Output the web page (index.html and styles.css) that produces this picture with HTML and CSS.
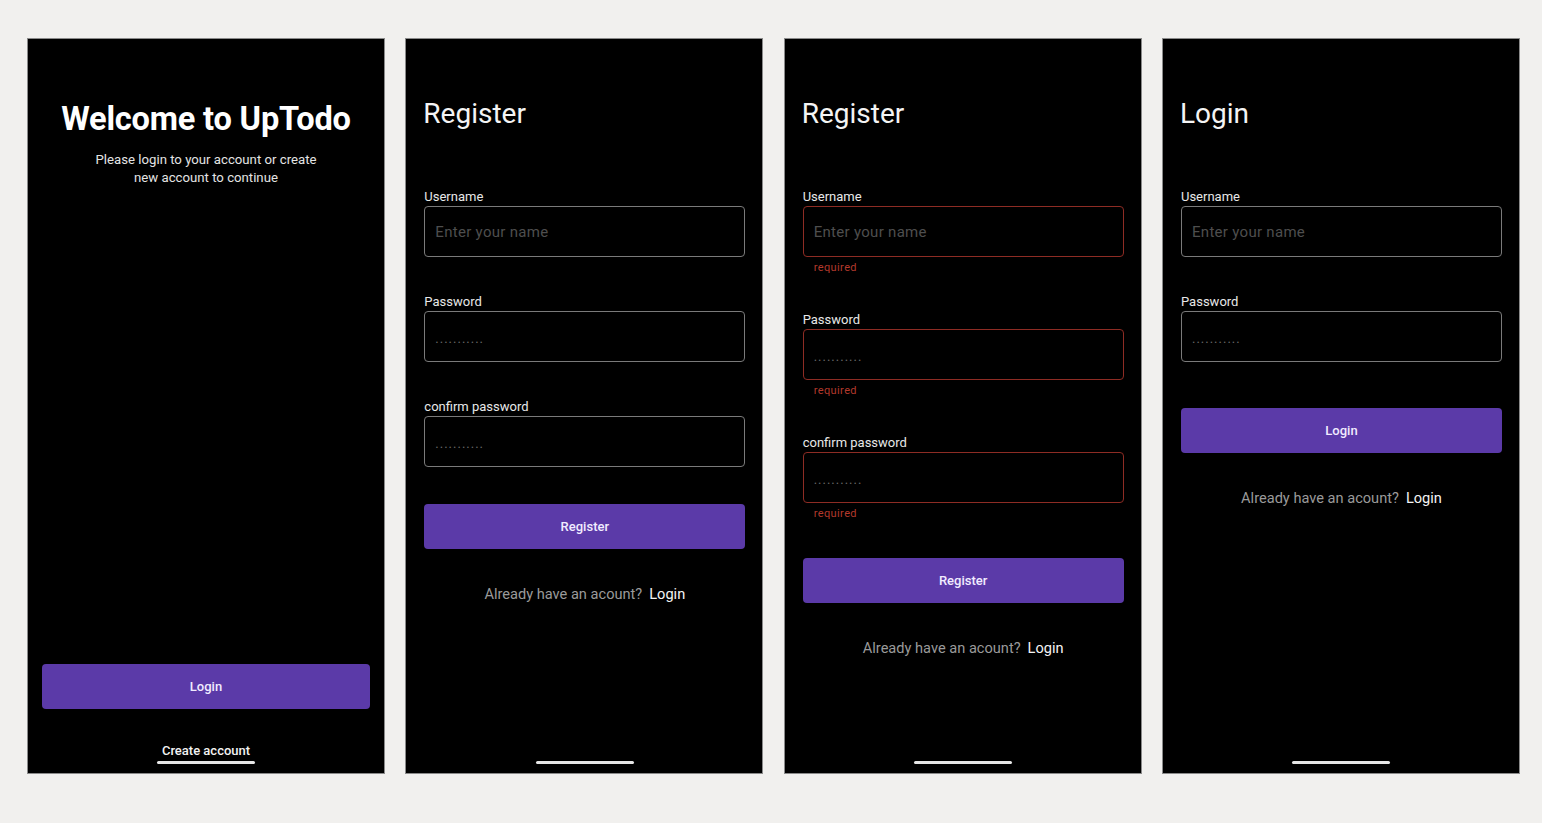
FILE: index.html
```html
<!DOCTYPE html>
<html>
	<head>
		<meta charset="UTF-8">
		<title>UpTodo</title>
		<link rel="stylesheet" href="styles.css">
	</head>
	<body>
		<div id="board">
			<div class="screen welcome">
				<h1 class="welcome-title">Welcome to UpTodo</h1>
				<p class="welcome-text">Please login to your account or create<br>new account to continue</p>
				<div class="spacer"></div>
				<button class="btn btn-wide" type="button">Login</button>
				<a class="create-link" href="javascript:void(0);">Create account</a>
				<div class="home-bar"></div>
			</div>

			<div class="screen">
				<h2 class="screen-title">Register</h2>
				<div class="field">
					<label>Username</label>
					<input type="text" placeholder="Enter your name">
				</div>
				<div class="field">
					<label>Password</label>
					<input class="dots" type="text" placeholder="...........">
				</div>
				<div class="field">
					<label>confirm password</label>
					<input class="dots" type="text" placeholder="...........">
				</div>
				<button class="btn" type="button">Register</button>
				<p class="switch">Already have an acount?<a href="javascript:void(0);">Login</a></p>
				<div class="home-bar"></div>
			</div>

			<div class="screen">
				<h2 class="screen-title">Register</h2>
				<div class="field error">
					<label>Username</label>
					<input type="text" placeholder="Enter your name">
					<span class="hint">required</span>
				</div>
				<div class="field error">
					<label>Password</label>
					<input class="dots" type="text" placeholder="...........">
					<span class="hint">required</span>
				</div>
				<div class="field error">
					<label>confirm password</label>
					<input class="dots" type="text" placeholder="...........">
					<span class="hint">required</span>
				</div>
				<button class="btn" type="button">Register</button>
				<p class="switch">Already have an acount?<a href="javascript:void(0);">Login</a></p>
				<div class="home-bar"></div>
			</div>

			<div class="screen login">
				<h2 class="screen-title">Login</h2>
				<div class="field">
					<label>Username</label>
					<input type="text" placeholder="Enter your name">
				</div>
				<div class="field">
					<label>Password</label>
					<input class="dots" type="text" placeholder="...........">
				</div>
				<button class="btn" type="button">Login</button>
				<p class="switch">Already have an acount?<a href="javascript:void(0);">Login</a></p>
				<div class="home-bar"></div>
			</div>
		</div>
	</body>
</html>
```

FILE: styles.css
```css
* {
	margin: 0;
	padding: 0;
	box-sizing: border-box;
}
body {
	background-color: #f1f0ee;
	font-family: Roboto, "Liberation Sans", sans-serif;
	color: #fff;
}
#board {
	display: flex;
	gap: 20.33px;
	padding: 38px 0 0 27px;
}
.screen {
	width: 358px;
	height: 735.5px;
	flex-shrink: 0;
	background-color: #000;
	border: 1px solid #8a8a8a;
	display: flex;
	flex-direction: column;
	padding: 57px 17px 9px 18px;
}
.welcome {
	padding: 60px 14px 9px 14px;
	align-items: stretch;
}
.welcome-title {
	font-size: 32.6px;
	font-weight: 700;
	line-height: 40px;
	text-align: center;
	letter-spacing: -0.2px;
}
.welcome-text {
	margin-top: 12px;
	font-size: 13.2px;
	line-height: 18px;
	text-align: center;
	color: #e4e4e4;
}
.spacer {
	flex: 1;
}
.btn {
	height: 45px;
	border: none;
	border-radius: 4px;
	background-color: #5b3aa8;
	color: #f1ecff;
	font-family: inherit;
	font-size: 13px;
	font-weight: 500;
	cursor: pointer;
	margin-top: 37px;
}
.btn-wide {
	margin-top: 0;
}
.login .btn {
	margin-top: 46px;
}
.create-link {
	margin-top: 33px;
	align-self: center;
	font-size: 13px;
	font-weight: 500;
	line-height: 18px;
	color: #f2f2f2;
	text-decoration: none;
}
.home-bar {
	margin-top: auto;
	align-self: center;
	width: 98px;
	height: 3px;
	border-radius: 2px;
	background-color: #e6e6e6;
	flex-shrink: 0;
}
.welcome .home-bar {
	margin-top: 1px;
}
.screen-title {
	font-size: 28px;
	font-weight: 400;
	line-height: 36px;
	color: #f4f4f4;
	margin-bottom: 57px;
	margin-left: -1px;
}
.field {
	display: flex;
	flex-direction: column;
}
.field + .field {
	margin-top: 37px;
}
.field label {
	font-size: 13px;
	line-height: 16px;
	color: #e8e8e8;
	margin-bottom: 1px;
}
.field input {
	height: 51px;
	border: 1px solid #7a7a7a;
	border-radius: 4px;
	background-color: #000;
	outline: none;
	padding: 0 10px;
	font-family: inherit;
	font-size: 15px;
	letter-spacing: 0.3px;
	color: #fff;
}
.field input::placeholder {
	color: #4e4e4e;
}
.field input.dots {
	font-size: 13px;
	letter-spacing: 1px;
	padding-top: 3px;
}
.field input.dots::placeholder {
	color: #6a6a6a;
}
.field.error input {
	border-color: #8e2c24;
}
.hint {
	margin-top: 4px;
	padding-left: 11px;
	font-size: 11px;
	line-height: 14px;
	letter-spacing: 0.4px;
	color: #b3392c;
}
.switch {
	margin-top: 35px;
	font-size: 14.6px;
	line-height: 20px;
	text-align: center;
	color: #9a9a9a;
}
.switch a {
	margin-left: 7px;
	color: #f4f4f4;
	text-decoration: none;
}
```
